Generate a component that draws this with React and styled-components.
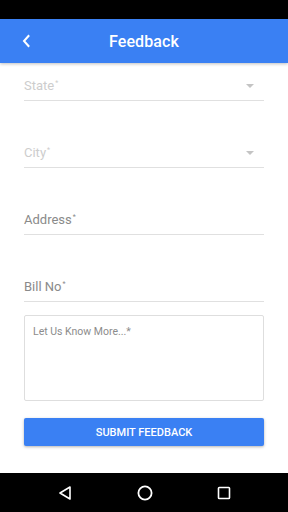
import React from "react";
import styled, { createGlobalStyle } from "styled-components";

const Global = createGlobalStyle`
  html, body { margin: 0; padding: 0; background: #fff; }
  body { font-family: Roboto, "Noto Sans", Arial, sans-serif; }
  * { box-sizing: border-box; }
`;

const Screen = styled.div`
  width: 288px;
  height: 512px;
  display: flex;
  flex-direction: column;
  background: #fff;
  overflow: hidden;
`;

const StatusBar = styled.div`
  height: 19px;
  background: #000;
  flex-shrink: 0;
`;

const AppBar = styled.div`
  height: 44px;
  background: #3a80f3;
  display: flex;
  align-items: center;
  justify-content: center;
  position: relative;
  flex-shrink: 0;
  box-shadow: 0 1px 3px rgba(0, 0, 0, 0.25);
  z-index: 1;
`;

const BackButton = styled.div`
  position: absolute;
  left: 19px;
  top: 14px;
  width: 14px;
  height: 16px;
  display: flex;
  align-items: center;
  justify-content: center;
`;

const Title = styled.div`
  color: #fff;
  font-size: 16px;
  font-weight: 500;
  letter-spacing: 0.1px;
`;

const Form = styled.div`
  flex: 1;
  display: flex;
  flex-direction: column;
  padding: 0 24px;
`;

const Field = styled.div`
  margin-top: ${(p) => (p.$first ? 0 : 29)}px;
  height: 38px;
  display: flex;
  align-items: flex-end;
  justify-content: space-between;
  padding-bottom: 6px;
  border-bottom: 1px solid #e0e0e0;
`;

const Label = styled.div`
  font-size: 13px;
  line-height: 16px;
  color: ${(p) => (p.$muted ? "#cdcdcd" : "#8a8a8a")};
`;

const Star = styled.sup`
  font-size: 7px;
  vertical-align: top;
  position: relative;
  top: -3px;
  margin-left: 1px;
`;

const Caret = styled.div`
  width: 0;
  height: 0;
  border-left: 4px solid transparent;
  border-right: 4px solid transparent;
  border-top: 4px solid #c4c4c4;
  margin-right: 10px;
  margin-bottom: 6px;
`;

const TextBox = styled.div`
  margin-top: 13px;
  height: 86px;
  border: 1px solid #dedede;
  border-radius: 2px;
  padding: 9px 8px;
  font-size: 10.5px;
  color: #8c8c8c;
`;

const SubmitButton = styled.div`
  margin-top: 17px;
  height: 28px;
  background: #3a80f3;
  border-radius: 2px;
  color: #fff;
  font-size: 11px;
  font-weight: 500;
  display: flex;
  align-items: center;
  justify-content: center;
  box-shadow: 0 1px 3px rgba(0, 0, 0, 0.3);
`;

const NavBar = styled.div`
  height: 39px;
  background: #000;
  flex-shrink: 0;
  display: flex;
  align-items: center;
  justify-content: space-between;
  padding: 0 56px 0 57px;
`;

const NavIcon = styled.svg`
  width: 16px;
  height: 16px;
  display: block;
`;

function SelectField({ label, first }) {
  return (
    <Field $first={first}>
      <Label $muted>
        {label}
        <Star>*</Star>
      </Label>
      <Caret />
    </Field>
  );
}

function TextField({ label }) {
  return (
    <Field>
      <Label>
        {label}
        <Star>*</Star>
      </Label>
    </Field>
  );
}

export default function App() {
  return (
    <Screen>
      <Global />
      <StatusBar />
      <AppBar>
        <BackButton>
          <svg width="10" height="14" viewBox="0 0 10 14">
            <path d="M7.5 2 L3 7 L7.5 12" fill="none" stroke="#fff" strokeWidth="2" strokeLinecap="square" />
          </svg>
        </BackButton>
        <Title>Feedback</Title>
      </AppBar>
      <Form>
        <SelectField label="State" first />
        <SelectField label="City" />
        <TextField label="Address" />
        <TextField label="Bill No" />
        <TextBox>Let Us Know More...*</TextBox>
        <SubmitButton>SUBMIT FEEDBACK</SubmitButton>
      </Form>
      <NavBar>
        <NavIcon viewBox="0 0 16 16">
          <path d="M13 2 L3 8 L13 14 Z" fill="none" stroke="#fff" strokeWidth="1.6" strokeLinejoin="round" />
        </NavIcon>
        <NavIcon viewBox="0 0 16 16">
          <circle cx="8" cy="8" r="6.6" fill="none" stroke="#fff" strokeWidth="1.8" />
        </NavIcon>
        <NavIcon viewBox="0 0 16 16">
          <rect x="2.5" y="2.5" width="11" height="11" rx="0.8" fill="none" stroke="#fff" strokeWidth="1.6" />
        </NavIcon>
      </NavBar>
    </Screen>
  );
}
